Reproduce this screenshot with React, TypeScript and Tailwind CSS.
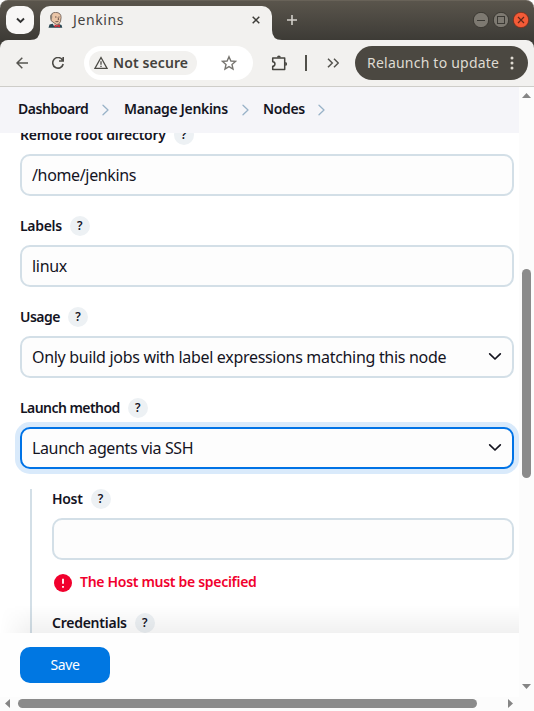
import type { ReactNode } from "react";

function Help() {
  return (
    <span className="flex h-5 w-5 shrink-0 items-center justify-center rounded-full bg-[#edf1f4] text-[12px] font-semibold leading-5 text-[#14141f]">
      ?
    </span>
  );
}

function Label({ children, className }: { children: ReactNode; className: string }) {
  return (
    <div className="flex h-5 items-center">
      <span className={`mr-2 shrink-0 whitespace-nowrap font-semibold leading-5 text-[14px] ${className}`}>{children}</span>
      <Help />
    </div>
  );
}

function Field({
  label,
  labelClass,
  value,
  valueClass = "",
  select = false,
  focused = false,
}: {
  label: string;
  labelClass: string;
  value?: string;
  valueClass?: string;
  select?: boolean;
  focused?: boolean;
}) {
  return (
    <div className="mb-5">
      <Label className={labelClass}>{label}</Label>
      <div
        className={`mt-[9px] flex h-[42px] items-center justify-between rounded-[10px] border-2 bg-[#fdfdfd] pl-[10px] pr-[10px] ${
          focused ? "border-[#0073e6] shadow-[0_0_0_5px_#d9eafb]" : "border-[#d3dfe7]"
        }`}
      >
        <span className={`whitespace-nowrap text-[16px] leading-6 ${valueClass}`}>{value}</span>
        {select && (
          <svg className="mb-[2px] h-4 w-[14px]" viewBox="0 0 14 16" fill="none" stroke="#14141f" strokeWidth="1.700" strokeLinecap="round" strokeLinejoin="round">
            <path d="M1.700 5.800L7 11l5.300-5.200" />
          </svg>
        )}
      </div>
    </div>
  );
}

function Crumb() {
  return (
    <svg className="h-3 w-2 shrink-0 translate-y-[1px]" viewBox="0 0 8 12" fill="none" stroke="#98b2c8" strokeWidth="1.3" strokeLinecap="round" strokeLinejoin="round">
      <path d="M1 1.300L6 6l-5 4.700" />
    </svg>
  );
}

function Butler() {
  return (
    <svg className="h-4 w-4 shrink-0" viewBox="0 0 16 16">
      <path d="M.5 15.800L1.500 12.500l4-1 5 .5 3 1 .8 2.800z" fill="#294652" />
      <path d="M4 10.500L6 14l4-.5 1-3z" fill="#ede8e0" />
      <path d="M2.800 5Q3 .5 7.500.4q5.600 0 5.600 5.100 0 5-2.500 6.700-2 1.300-4.500-1.300L3 8.500z" fill="#eac5a7" stroke="#51413a" strokeWidth=".7" />
      <path d="M2.900 7.500Q1 4 3.500 1.700L5 1.400Q3.500 3 4.300 5L3.700 8z" fill="#8a8279" />
      <path d="M7 5h1.500M10.500 5h1M10 5.500l.7 2-1 .2M7.500 9.500q1.500.7 3-.2" fill="none" stroke="#49342e" strokeWidth=".8" />
      <path d="M6.500 12.500l2.400 1 3-1v3l-2.700-1-2.700 1z" fill="#d52c36" />
    </svg>
  );
}

function TitleBar() {
  return (
    <div className="h-10 rounded-t-lg border-t border-[#686258] bg-gradient-to-b from-[#5a554c] to-[#3d3b36]">
      <div className="-mt-px flex h-10">
        <div className="flex w-10 shrink-0 pl-[6px] pt-[6px]">
          <div className="flex h-7 w-7 items-center justify-center rounded-[10px] bg-[#f8f7f6]">
            <svg className="h-[7px] w-[9px]" viewBox="0 0 9 7" fill="none" stroke="#333" strokeWidth="1.900">
              <path d="M1 1.500l3.500 3.500L8 1.500" />
            </svg>
          </div>
        </div>
        <div className="relative mt-[6px] flex h-[34px] w-[232px] shrink-0 items-center rounded-t-[10px] bg-[#f2f1ef] pb-[6px] pl-[8px]">
          <svg className="absolute -left-[10px] bottom-0 h-[10px] w-[10px]" viewBox="0 0 10 10" fill="#f2f1ef">
            <path d="M10 0v10H0Q10 10 10 0z" />
          </svg>
          <svg className="absolute -right-[10px] bottom-0 h-[10px] w-[10px]" viewBox="0 0 10 10" fill="#f2f1ef">
            <path d="M0 0v10h10Q0 10 0 0z" />
          </svg>
          <Butler />
          <span className="ml-[9px] text-[14px] leading-5 tracking-[0.6px] text-[#45433f]">Jenkins</span>
          <svg className="ml-auto mr-[12px] h-2 w-2" viewBox="0 0 8 8" stroke="#3e3d39" strokeWidth="1.500">
            <path d="M.7.7l6.600 6.600M7.300.7L.7 7.300" />
          </svg>
        </div>
        <svg className="ml-[15px] mt-[15px] h-[10px] w-[10px]" viewBox="0 0 10 10" stroke="#d3d0ca" strokeWidth="1.600">
          <path d="M5 0v10M0 5h10" />
        </svg>
        <div className="ml-auto flex gap-1 pr-[5px] pt-3">
          <svg className="h-4 w-4" viewBox="0 0 16 16">
            <circle cx="8" cy="8" r="7.700" fill="#7d7971" stroke="#35332e" strokeWidth=".9" />
            <path d="M4 8.500h8" stroke="#3b3934" />
          </svg>
          <svg className="h-4 w-4" viewBox="0 0 16 16">
            <circle cx="8" cy="8" r="7.700" fill="#7d7971" stroke="#35332e" strokeWidth=".9" />
            <rect x="4.500" y="4.500" width="7" height="7" fill="none" stroke="#3b3934" />
          </svg>
          <svg className="h-4 w-4" viewBox="0 0 16 16">
            <circle cx="8" cy="8" r="7.700" fill="#f45b37" stroke="#682719" strokeWidth=".7" />
            <path d="M5 5l6 6M11 5l-6 6" stroke="#612619" strokeWidth="1.200" />
          </svg>
        </div>
      </div>
    </div>
  );
}

function Toolbar() {
  return (
    <div className="bg-[#3d3b36]">
      <div className="flex h-[47px] items-center rounded-t-[8px] border-b border-[#cecdc9] bg-[#f2f1ef]">
        <svg className="ml-4 h-3 w-3" viewBox="0 0 12 12" fill="none" stroke="#565550" strokeWidth="1.500">
          <path d="M12 6H1M6.300.7L1 6l5.300 5.300" />
        </svg>
        <svg className="ml-[24px] h-3 w-3" viewBox="0 0 12 12" fill="none" stroke="#4c4b46" strokeWidth="1.600">
          <path d="M10.500 3A5.300 5.300 0 1 0 11.200 7M11.200 0v4H7" />
        </svg>
        <div className="ml-5 flex h-[34px] w-[169px] items-center rounded-full bg-white pl-[5px] pr-4">
          <div className="flex h-6 w-[108px] items-center rounded-full bg-[#f2f1ef] pl-[5px]">
            <svg className="h-[14px] w-[14px] shrink-0" viewBox="0 0 14 14" fill="none" stroke="#4b4a45" strokeWidth="1.300">
              <path d="M7 1.500L.9 12.400h12.200zM7 5.300v3.500M7 9.700v1.300" />
            </svg>
            <span className="ml-[5px] whitespace-nowrap text-[14px] font-semibold leading-5 tracking-[0.1px] text-[#43413c]">Not secure</span>
          </div>
          <svg className="ml-auto mr-[1px] h-4 w-4 translate-x-[1px]" viewBox="0 0 16 16" fill="none" stroke="#777570" strokeWidth="1.400">
            <path d="M8 1.700l1.900 4.300 4.600.4L11 9.500l1 4.500-4-2.400L4 14l1-4.500L1.500 6.400 6.100 6z" />
          </svg>
        </div>
        <svg className="ml-[18px] h-[17px] w-[17px]" viewBox="0 0 17 17" fill="none">
          <path d="M1.700 3h12v11.600h-12v-3.300a2.100 2.100 0 0 0 0-4.500z" stroke="#45443f" strokeWidth="1.500" strokeLinejoin="round" />
          <path d="M6 2.500a1.900 1.900 0 0 1 3.800 0zM14.200 7a1.900 1.900 0 0 1 0 3.800z" fill="#45443f" />
        </svg>
        <div className="ml-[17px] h-4 w-[2px] bg-[#51504a]" />
        <svg className="ml-[20px] h-[10px] w-3" viewBox="0 0 12 10" fill="none" stroke="#53524d" strokeWidth="1.500">
          <path d="M1 .7L5.300 5 1 9.300M7 .7L11.300 5 7 9.300" />
        </svg>
        <div className="ml-auto mr-[6px] flex h-[34px] w-[173px] items-center rounded-full bg-[#4b4841] pl-3 text-[#dfdbd2]">
          <span className="whitespace-nowrap text-[14px] leading-5 tracking-[0.22px]">Relaunch to update</span>
          <svg className="ml-auto mr-[14px] h-[14px] w-1" viewBox="0 0 4 14" fill="#dfdbd2">
            <circle cx="2" cy="2" r="1.500" />
            <circle cx="2" cy="7" r="1.500" />
            <circle cx="2" cy="12" r="1.500" />
          </svg>
        </div>
      </div>
    </div>
  );
}

export default function App() {
  return (
    <div className="flex h-[711px] w-[534px] flex-col overflow-hidden bg-white font-['Noto_Sans','Open_Sans',sans-serif] text-[#14141f]">
      <TitleBar />
      <Toolbar />
      <div className="flex h-[610px]">
        <div className="flex w-[519px] flex-col">
          <nav className="z-10 flex h-[46px] shrink-0 items-center whitespace-nowrap bg-[#f5f5f9] pb-[2px] pl-[18px] text-[14px] font-semibold leading-5">
            <span className="w-[84px] tracking-[-0.45px]">Dashboard</span>
            <Crumb />
            <span className="ml-[14px] w-[118px] tracking-[-0.33px]">Manage Jenkins</span>
            <Crumb />
            <span className="ml-[13px] w-[55px] tracking-[-0.35px]">Nodes</span>
            <Crumb />
          </nav>
          <main className="relative h-[500px] overflow-hidden pl-5 pr-[5px]">
            <div className="-mt-2">
              <Field label="Remote root directory" labelClass="tracking-[-0.25px]" value="/home/jenkins" valueClass="tracking-[-0.35px]" />
              <Field label="Labels" labelClass="tracking-[-0.3px]" value="linux" valueClass="tracking-[-0.3px]" />
              <Field label="Usage" labelClass="tracking-[-0.5px]" value="Only build jobs with label expressions matching this node" valueClass="tracking-[-0.305px]" select />
              <Field label="Launch method" labelClass="tracking-[-0.56px]" value="Launch agents via SSH" valueClass="tracking-[-0.37px]" select focused />
              <div className="ml-[10px] h-[150px] border-l-2 border-[#d3dfe7] pl-5">
                <Field label="Host" labelClass="tracking-[-0.3px]" />
                <div className="-mt-[8px] mb-[21px] flex h-5 items-center pl-[2px]">
                  <svg className="h-[18px] w-[18px] translate-y-[1px]" viewBox="0 0 18 18">
                    <circle cx="9" cy="9" r="9" fill="#f1002d" />
                    <path d="M9 4.800v5M9 12v1.800" stroke="white" strokeWidth="1.800" />
                  </svg>
                  <span className="ml-[8px] whitespace-nowrap text-[14px] font-semibold leading-5 tracking-[-0.3px] text-[#f1002d]">The Host must be specified</span>
                </div>
                <Label className="tracking-[-0.25px]">Credentials</Label>
              </div>
            </div>
            <div className="absolute bottom-0 left-0 right-0 h-7 bg-gradient-to-b from-black/0 to-black/[0.055] [mask-image:linear-gradient(to_right,transparent,black_30px)]" />
          </main>
          <footer className="flex h-16 shrink-0 items-start bg-[#fefefe] pl-5 pt-[14px]">
            <button className="h-9 w-[90px] rounded-[10px] bg-[#0077e2] text-[14px] leading-5 tracking-[-0.4px] text-white">Save</button>
          </footer>
        </div>
        <div className="flex w-[15px] flex-col items-center bg-[#fcfcfc]">
          <svg className="mt-[6px] h-[5px] w-[9px]" viewBox="0 0 9 5" fill="#858585">
            <path d="M0 5L4.500 0 9 5z" />
          </svg>
          <div className="mt-[171px] h-[209px] w-[9px] rounded-full bg-[#8b8b8b]" />
          <svg className="mb-[8px] mt-auto h-[5px] w-[9px]" viewBox="0 0 9 5" fill="#858585">
            <path d="M0 0l4.500 5L9 0z" />
          </svg>
        </div>
      </div>
      <div className="flex h-[14px] items-start bg-[#fcfcfc] pt-[2px]">
        <svg className="ml-[5px] h-[9px] w-[5px]" viewBox="0 0 5 9" fill="#858585">
          <path d="M5 0L0 4.500 5 9z" />
        </svg>
        <div className="ml-2 h-[9px] w-[459px] rounded-full bg-[#8b8b8b]" />
        <svg className="ml-[31px] h-[9px] w-[5px]" viewBox="0 0 5 9" fill="#858585">
          <path d="M0 0l5 4.500L0 9z" />
        </svg>
      </div>
    </div>
  );
}
